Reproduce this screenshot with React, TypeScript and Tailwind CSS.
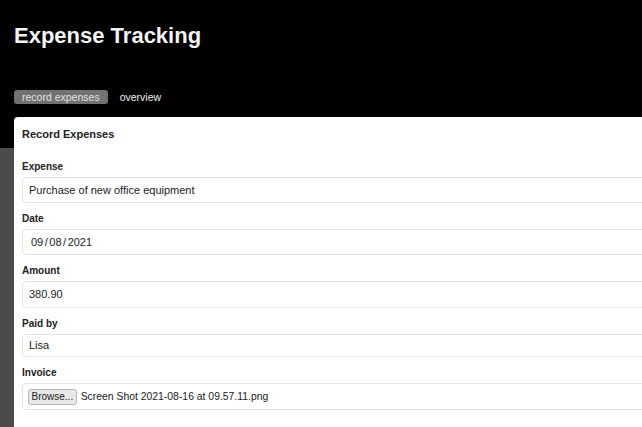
import React from 'react';

// Form fields shown in the record expenses card
const fields = [
  { label: 'Expense', value: 'Purchase of new office equipment', height: 'h-[26px]' },
  { label: 'Date', value: 'date', height: 'h-[26px]' },
  { label: 'Amount', value: '380.90', height: 'h-[27px]' },
  { label: 'Paid by', value: 'Lisa', height: 'h-[23px]' },
];

export default function App() {
  return (
    <div className="h-screen bg-[#4b4b4b] overflow-hidden font-['Liberation_Sans',Arial,sans-serif]">
      {/* Header */}
      <div className="bg-black pl-[14px] pt-[23px] pb-[44px]">
        <h1 className="text-[22px] leading-[26px] font-bold text-[#f4f4f4]">Expense Tracking</h1>
        <div className="mt-[41px] flex items-center gap-[12px] text-[10.5px] leading-[14px]">
          <span className="rounded-[3px] bg-[#727272] px-[8px] text-[#e2e2e2]">record expenses</span>
          <span className="text-[#f2f2f2]">overview</span>
        </div>
      </div>

      {/* Card */}
      <div className="-mt-[31px] ml-[14px] w-[700px] rounded-tl-[4px] bg-white pl-[8px] pt-[10px] pb-[60px] text-[#222]">
        <h2 className="text-[11px] leading-[14px] font-bold">Record Expenses</h2>
        <div className="mt-[20px] flex flex-col gap-[10px]">
          {fields.map((f) => (
            <div key={f.label}>
              <div className="mb-[4px] text-[10px] leading-[12px] font-bold">{f.label}</div>
              <div className={`${f.height} flex items-center rounded-[4px] border border-[#e4e4e4] px-[6px] text-[11px]`}>
                {f.value === 'date' ? (
                  <span className="pl-[2px]">
                    09<span className="px-[1.5px]">/</span>08<span className="px-[1.5px]">/</span>2021
                  </span>
                ) : (
                  <span>{f.value}</span>
                )}
              </div>
            </div>
          ))}
          <div>
            <div className="mb-[4px] text-[10px] leading-[12px] font-bold">Invoice</div>
            <div className="h-[27px] flex items-center gap-[4px] rounded-[4px] border border-[#e4e4e4] px-[5px] text-[10.4px]">
              <span className="flex h-[16px] items-center rounded-[3px] border border-[#b8b8b8] bg-[#e8e8e8] px-[2.5px] text-[10px] text-[#222]">
                Browse...
              </span>
              <span>Screen Shot 2021-08-16 at 09.57.11.png</span>
            </div>
          </div>
        </div>
      </div>
    </div>
  );
}
